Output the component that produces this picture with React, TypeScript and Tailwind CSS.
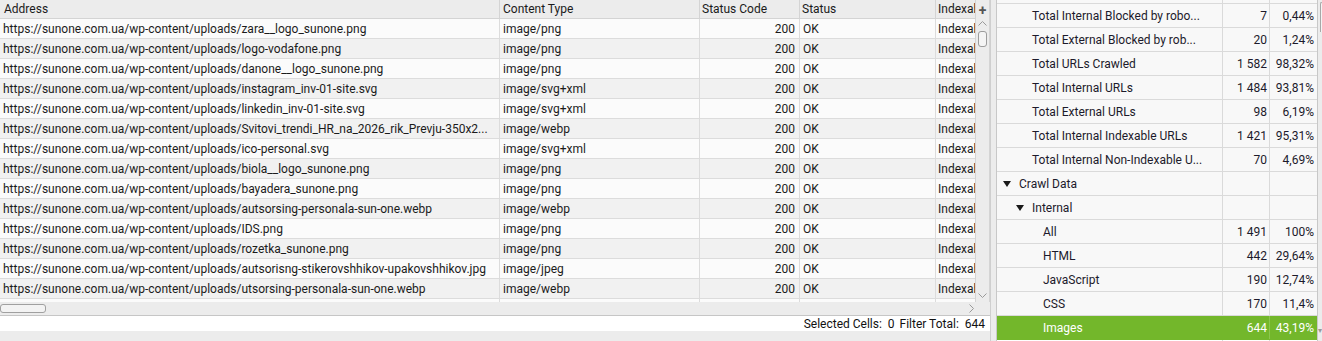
import React from "react";

const base = "https://sunone.com.ua/wp-content/uploads/";

const urlRows = [
  ["zara__logo_sunone.png", "image/png"],
  ["logo-vodafone.png", "image/png"],
  ["danone__logo_sunone.png", "image/png"],
  ["instagram_inv-01-site.svg", "image/svg+xml"],
  ["linkedin_inv-01-site.svg", "image/svg+xml"],
  ["Svitovi_trendi_HR_na_2026_rik_Prevju-350x2...", "image/webp"],
  ["ico-personal.svg", "image/svg+xml"],
  ["biola__logo_sunone.png", "image/png"],
  ["bayadera_sunone.png", "image/png"],
  ["autsorsing-personala-sun-one.webp", "image/webp"],
  ["IDS.png", "image/png"],
  ["rozetka_sunone.png", "image/png"],
  ["autsorisng-stikerovshhikov-upakovshhikov.jpg", "image/jpeg"],
  ["utsorsing-personala-sun-one.webp", "image/webp"],
];

type Stat = { label: string; num?: string; pct?: string; level: number; tree?: boolean; active?: boolean };

const stats: Stat[] = [
  { label: "Total Internal Blocked by robo...", num: "7", pct: "0,44%", level: 2 },
  { label: "Total External Blocked by rob...", num: "20", pct: "1,24%", level: 2 },
  { label: "Total URLs Crawled", num: "1 582", pct: "98,32%", level: 2 },
  { label: "Total Internal URLs", num: "1 484", pct: "93,81%", level: 2 },
  { label: "Total External URLs", num: "98", pct: "6,19%", level: 2 },
  { label: "Total Internal Indexable URLs", num: "1 421", pct: "95,31%", level: 2 },
  { label: "Total Internal Non-Indexable U...", num: "70", pct: "4,69%", level: 2 },
  { label: "Crawl Data", level: 0, tree: true },
  { label: "Internal", level: 1, tree: true },
  { label: "All", num: "1 491", pct: "100%", level: 3 },
  { label: "HTML", num: "442", pct: "29,64%", level: 3 },
  { label: "JavaScript", num: "190", pct: "12,74%", level: 3 },
  { label: "CSS", num: "170", pct: "11,4%", level: 3 },
  { label: "Images", num: "644", pct: "43,19%", level: 3, active: true },
];

const indent = ["pl-[6px]", "pl-[19px]", "pl-[35px]", "pl-[46px]"];

function Triangle() {
  return (
    <svg width="8" height="6" viewBox="0 0 8 6" className="mr-[8px] shrink-0">
      <path d="M0 0 L8 0 L4 6 Z" fill="#1a1a1a" />
    </svg>
  );
}

function UrlTable() {
  return (
    <div className="flex h-[302px] overflow-hidden">
      <div className="w-[975px] overflow-hidden">
        <div className="flex h-[19px] bg-[#ececec] border-b border-[#d4d4d4] items-center">
          <div className="w-[500px] h-full pl-[4px] flex items-center border-r border-[#d4d4d4]">Address</div>
          <div className="w-[200px] h-full pl-[3px] flex items-center border-r border-[#d4d4d4]">Content Type</div>
          <div className="w-[100px] h-full pl-[2px] flex items-center border-r border-[#d4d4d4]">Status Code</div>
          <div className="w-[136px] h-full pl-[2px] flex items-center border-r border-[#d4d4d4]">Status</div>
          <div className="flex-1 h-full pl-[2px] flex items-center overflow-hidden whitespace-nowrap">Indexab</div>
        </div>
        {[...urlRows, ["", ""]].map(([file, type], i) => (
          <div
            key={i}
            className={`flex h-[20px] border-b border-[#dcdcdc] items-center whitespace-nowrap ${
              i % 2 === 0 ? "bg-[#fbfbfb]" : "bg-[#f1f1f1]"
            }`}
          >
            <div className="w-[500px] h-full pl-[3px] flex items-center border-r border-[#dcdcdc] overflow-hidden">
              {file ? base + file : ""}
            </div>
            <div className="w-[200px] h-full pl-[3px] flex items-center border-r border-[#dcdcdc]">{type}</div>
            <div className="w-[100px] h-full pr-[4px] flex items-center justify-end border-r border-[#dcdcdc]">
              {file ? "200" : ""}
            </div>
            <div className="w-[136px] h-full pl-[3px] flex items-center border-r border-[#dcdcdc]">
              {file ? "OK" : ""}
            </div>
            <div className="flex-1 h-full pl-[2px] flex items-center overflow-hidden">{file ? "Indexab" : ""}</div>
          </div>
        ))}
      </div>
      <div className="w-[15px] flex flex-col bg-[#ececec] border-l border-[#d4d4d4] border-r">
        <div className="h-[19px] flex items-center justify-center text-[14px] font-bold text-[#555] leading-none">+</div>
        <div className="h-[8px] flex items-center justify-center">
          <svg width="9" height="5" viewBox="0 0 9 5">
            <path d="M0.5 4.5 L4.5 0.5 L8.5 4.5" stroke="#9a9a9a" fill="none" />
          </svg>
        </div>
        <div className="mt-[4px] mx-auto w-[9px] h-[16px] rounded-[3px] border border-[#9c9c9c] bg-[#f4f4f4]" />
        <div className="flex-1" />
        <div className="h-[10px] flex items-center justify-center mb-[2px]">
          <svg width="9" height="5" viewBox="0 0 9 5">
            <path d="M0.5 0.5 L4.5 4.5 L8.5 0.5" stroke="#9a9a9a" fill="none" />
          </svg>
        </div>
      </div>
    </div>
  );
}

function StatsPanel() {
  return (
    <div className="flex-1 flex bg-[#f8f8f8] border-l border-[#c8c8c8] overflow-hidden text-[#1c1a2b]">
      <div className="w-[320px] flex flex-col">
        <div className="h-[4px] flex border-b border-[#dadada]">
          <div className="w-[226px] border-r border-[#dadada]" />
          <div className="w-[47px] border-r border-[#dadada]" />
        </div>
        {stats.map((s, i) => (
          <div
            key={i}
            className={`flex h-[24px] border-b whitespace-nowrap ${
              s.active ? "bg-[#73b72b] text-white border-[#73b72b]" : "border-[#dadada]"
            }`}
          >
            <div
              className={`w-[226px] h-full flex items-center border-r ${indent[s.level]} ${
                s.active ? "border-[#73b72b]" : "border-[#dadada]"
              }`}
            >
              {s.tree && <Triangle />}
              {s.label}
            </div>
            <div
              className={`w-[47px] h-full flex items-center justify-end pr-[2px] border-r ${
                s.active ? "border-[#8cc64e]" : "border-[#dadada]"
              }`}
            >
              {s.num}
            </div>
            <div className="w-[47px] h-full flex items-center justify-end pr-[3px]">{s.pct}</div>
          </div>
        ))}
        <div className="flex-1 flex bg-white">
          <div className="w-[226px] border-r border-[#dadada]" />
          <div className="w-[47px] border-r border-[#dadada]" />
        </div>
      </div>
      <div className="w-[6px] bg-[#ececec] border-l border-[#c8c8c8] flex flex-col">
        <div className="mt-[2px] ml-[2px] h-[30px] rounded-tl-[3px] border-l border-t border-[#a8a8a8] bg-[#f4f4f4]" />
        <div className="flex-1" />
        <div className="h-[14px] text-[8px] text-[#999] leading-none">▾</div>
      </div>
    </div>
  );
}

export default function App() {
  return (
    <div
      className="w-[1322px] h-[341px] flex bg-[#ececec] text-[12px] text-[#1b1b1b] overflow-hidden"
      style={{ fontFamily: "Roboto, 'Noto Sans', sans-serif" }}
    >
      <div className="w-[991px] flex flex-col border-r border-[#cfcfcf]">
        <UrlTable />
        <div className="h-[14px] flex items-center bg-[#ececec] border-b border-[#c6c6c6]">
          <div className="ml-0 w-[46px] h-[9px] rounded-[3px] border border-[#a0a0a0] bg-[#f3f3f3]" />
          <div className="flex-1" />
          <svg width="5" height="9" viewBox="0 0 5 9" className="mr-[16px]">
            <path d="M0.5 0.5 L4.5 4.5 L0.5 8.5" stroke="#9a9a9a" fill="none" />
          </svg>
        </div>
        <div className="h-[15px] bg-white flex items-center justify-end pr-[5px] gap-[5px] whitespace-nowrap text-[#111]">
          <span>Selected Cells:&nbsp; 0</span>
          <span>Filter Total:&nbsp; 644</span>
        </div>
        <div className="flex-1 bg-[#ececec]" />
      </div>
      <div className="w-[5px] bg-[#ececec]" />
      <StatsPanel />
    </div>
  );
}
